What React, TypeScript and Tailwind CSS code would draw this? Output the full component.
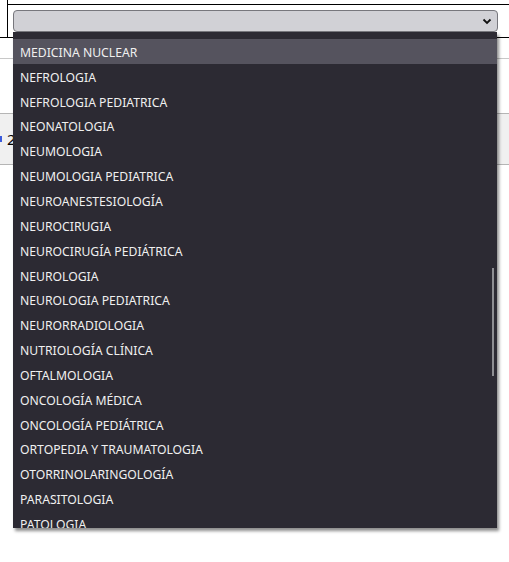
import React from "react";

const items = [
  "NEFROLOGIA",
  "NEFROLOGIA PEDIATRICA",
  "NEONATOLOGIA",
  "NEUMOLOGIA",
  "NEUMOLOGIA PEDIATRICA",
  "NEUROANESTESIOLOGÍA",
  "NEUROCIRUGIA",
  "NEUROCIRUGÍA PEDIÁTRICA",
  "NEUROLOGIA",
  "NEUROLOGIA PEDIATRICA",
  "NEURORRADIOLOGIA",
  "NUTRIOLOGÍA CLÍNICA",
  "OFTALMOLOGIA",
  "ONCOLOGÍA MÉDICA",
  "ONCOLOGÍA PEDIÁTRICA",
  "ORTOPEDIA Y TRAUMATOLOGIA",
  "OTORRINOLARINGOLOGÍA",
  "PARASITOLOGIA",
  "PATOLOGIA",
];

export default function App() {
  return (
    <div
      className="relative w-[509px] h-[562px] bg-white overflow-hidden text-black"
      style={{ fontFamily: "'Noto Sans', 'DejaVu Sans', sans-serif" }}
    >
      {/* top table row */}
      <div className="flex h-[38px]">
        <div className="w-[7px] border-b border-black" />
        <div className="flex-1 border-l border-black flex flex-col">
          <div className="h-[4px]" />
          <div className="flex-1 border-t border-b border-black pl-[5px] pt-[5px]">
            <div className="h-[22px] w-[485px] rounded-[4px] border border-[#77777d] bg-[#d1d1d6] flex items-center justify-end pr-[5px]">
              <svg width="10" height="7" viewBox="0 0 10 7">
                <path d="M1.5 1.5 L5 5 L8.5 1.5" fill="none" stroke="#111" strokeWidth="1.8" />
              </svg>
            </div>
          </div>
        </div>
      </div>
      <div className="h-[20px]" />
      <div className="border-t border-[#c8c8c8]" />
      <div className="h-[54px]" />
      <div className="h-[52px] border-t border-b border-[#b5b5b5] bg-[#f0f0f0] flex items-center">
        <div className="w-[2px] h-[6px] bg-[#3b5bdb]" />
        <span className="ml-[5px] text-[15px]">2</span>
      </div>

      {/* dropdown popup */}
      <div className="absolute left-[13px] top-[32px] w-[484px] h-[496px] bg-[#2c2a33] shadow-[2px_3px_3px_rgba(0,0,0,0.45)] overflow-hidden">
        <div className="h-[7px]" />
        <div className="h-[25px] bg-[#55535e] text-[#f0f0f0] text-[12.2px] pl-[7px] pt-[3px] flex items-center">
          MEDICINA NUCLEAR
        </div>
        {items.map((t) => (
          <div
            key={t}
            className="h-[24.85px] text-[#f0f0f0] text-[12.2px] pl-[7px] pt-[3px] flex items-center whitespace-nowrap"
          >
            {t}
          </div>
        ))}
        <div className="absolute right-[3px] top-[236px] w-[2px] h-[108px] bg-[#8e8e93]" />
      </div>
    </div>
  );
}
